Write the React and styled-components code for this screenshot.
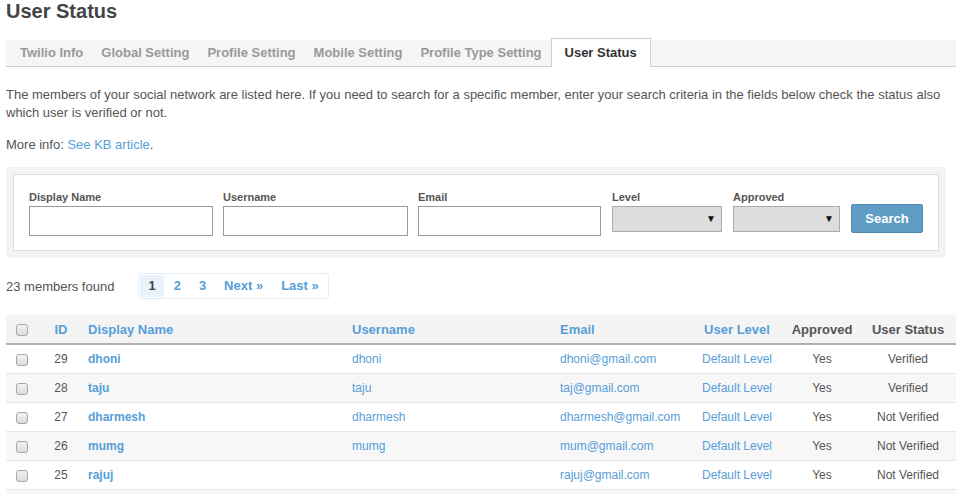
import React from 'react'
import styled, { createGlobalStyle } from 'styled-components'

const GlobalStyle = createGlobalStyle`
    body {
        margin: 0;
        background: #fff;
        font-family: 'Liberation Sans', Arial, sans-serif;
        font-size: 13px;
        color: #555;
    }
`

const Page = styled.div`
    padding: 0 6px;
`

const Title = styled.h1`
    margin: 0;
    font-size: 20px;
    line-height: 22px;
    font-weight: bold;
    color: #444;
`

const TabBar = styled.div`
    display: flex;
    align-items: flex-end;
    margin-top: 18px;
    height: 26px;
    padding-left: 5px;
    background: #f5f5f5;
    border-bottom: 1px solid #ccc;
`

const Tab = styled.div`
    height: ${p => (p.$active ? '28px' : '26px')};
    line-height: ${p => (p.$active ? '28px' : '26px')};
    padding: 0 ${p => (p.$active ? '13px' : '9px')};
    margin-bottom: ${p => (p.$active ? '-1px' : '0')};
    font-weight: bold;
    font-size: 13px;
    color: ${p => (p.$active ? '#333' : '#999')};
    background: ${p => (p.$active ? '#fff' : 'transparent')};
    border: ${p => (p.$active ? '1px solid #ccc' : 'none')};
    border-bottom: none;
`

const Text = styled.p`
    margin: ${p => p.$margin || '0'};
    line-height: 18px;
    color: #555;
`

const Link = styled.a`
    color: #569ed8;
    text-decoration: none;
    font-weight: ${p => (p.$bold ? 'bold' : 'normal')};
`

const SearchPanel = styled.div`
    margin-top: 13px;
    width: 940px;
    box-sizing: border-box;
    padding: 7px;
    background: #f3f3f3;
    border-radius: 4px;
`

const SearchInner = styled.div`
    display: flex;
    align-items: flex-end;
    gap: 10px;
    padding: 15px 15px 14px;
    background: #fff;
    border: 1px solid #ddd;
`

const Field = styled.div`
    display: flex;
    flex-direction: column;
    width: ${p => p.$width}px;
    margin-right: ${p => p.$gap || 0}px;
`

const Label = styled.label`
    font-size: 11px;
    font-weight: bold;
    line-height: 14px;
    color: #555;
    margin-bottom: 2px;
`

const Input = styled.input`
    box-sizing: border-box;
    height: 30px;
    width: 100%;
    border: 1px solid #999;
    background: #fff;
    margin: 0;
    padding: 0 4px;
`

const Select = styled.div`
    position: relative;
    box-sizing: border-box;
    height: 26px;
    margin-bottom: 4px;
    border: 1px solid #aaa;
    background: #ddd;

    &::after {
        content: '▼';
        position: absolute;
        right: 5px;
        top: 6px;
        font-size: 10px;
        line-height: 12px;
        color: #111;
    }
`

const Button = styled.button`
    box-sizing: border-box;
    width: 72px;
    height: 29px;
    margin-bottom: 3px;
    margin-left: 1px;
    border: 1px solid #5089b0;
    border-radius: 2px;
    background: #5f9dc4;
    color: #fff;
    font-family: 'Liberation Sans', Arial, sans-serif;
    font-size: 13px;
    font-weight: bold;
`

const PagerRow = styled.div`
    display: flex;
    align-items: center;
    margin-top: 15px;
`

const Count = styled.span`
    margin-right: 24px;
    color: #555;
`

const Pager = styled.div`
    display: flex;
    padding: 1px;
    border: 1px solid #e4eef8;
    border-radius: 2px;
`

const PageItem = styled.span`
    height: 22px;
    line-height: 22px;
    padding: 0 8px;
    margin-right: 2px;
    font-weight: bold;
    color: ${p => (p.$active ? '#444' : '#569ed8')};
    background: ${p => (p.$active ? '#eaf2fa' : 'transparent')};
    border-radius: 2px;

    &:last-child {
        margin-right: 0;
    }
`

const Table = styled.table`
    margin-top: 16px;
    width: 950px;
    border-collapse: collapse;
    table-layout: fixed;
`

const Th = styled.th`
    height: 28px;
    padding: 0 6px;
    background: #f4f4f4;
    border-bottom: 2px solid #b0b0b0;
    font-weight: bold;
    font-size: 13px;
    color: ${p => (p.$plain ? '#555' : '#569ed8')};
    text-align: ${p => p.$align || 'left'};
`

const Row = styled.tr`
    background: ${p => (p.$alt ? '#f7f7f7' : '#fff')};
    border-bottom: 1px solid #e6e6e6;
`

const Td = styled.td`
    height: 28px;
    padding: 0 6px;
    font-size: 12px;
    color: #555;
    text-align: ${p => p.$align || 'left'};
    white-space: nowrap;
`

const Check = styled.span`
    display: inline-block;
    vertical-align: middle;
    box-sizing: border-box;
    width: 12px;
    height: 12px;
    margin-left: -2px;
    border: 1px solid #a8a8a8;
    border-radius: 3px;
    background: linear-gradient(#f2f2f2, #dcdcdc);
`

const tabs = ['Twilio Info', 'Global Setting', 'Profile Setting', 'Mobile Setting', 'Profile Type Setting', 'User Status']

const members = [
    { id: 29, name: 'dhoni', user: 'dhoni', email: 'dhoni@gmail.com', status: 'Verified' },
    { id: 28, name: 'taju', user: 'taju', email: 'taj@gmail.com', status: 'Verified' },
    { id: 27, name: 'dharmesh', user: 'dharmesh', email: 'dharmesh@gmail.com', status: 'Not Verified' },
    { id: 26, name: 'mumg', user: 'mumg', email: 'mum@gmail.com', status: 'Not Verified' },
    { id: 25, name: 'rajuj', user: '', email: 'rajuj@gmail.com', status: 'Not Verified' },
]

function App() {
    return (
        <Page>
            <GlobalStyle />
            <Title>User Status</Title>
            <TabBar>
                {tabs.map(t => (
                    <Tab key={t} $active={t === 'User Status'}>{t}</Tab>
                ))}
            </TabBar>

            <Text $margin="19px 0 0">
                The members of your social network are listed here. If you need to search for a specific member, enter your search criteria in the fields below check the status also which user is verified or not.
            </Text>
            <Text $margin="14px 0 0">
                More info: <Link href="#">See KB article</Link>.
            </Text>

            <SearchPanel>
                <SearchInner>
                    <Field $width={184}>
                        <Label>Display Name</Label>
                        <Input />
                    </Field>
                    <Field $width={185}>
                        <Label>Username</Label>
                        <Input />
                    </Field>
                    <Field $width={183} $gap={1}>
                        <Label>Email</Label>
                        <Input />
                    </Field>
                    <Field $width={110} $gap={1}>
                        <Label>Level</Label>
                        <Select />
                    </Field>
                    <Field $width={107}>
                        <Label>Approved</Label>
                        <Select />
                    </Field>
                    <Button>Search</Button>
                </SearchInner>
            </SearchPanel>

            <PagerRow>
                <Count>23 members found</Count>
                <Pager>
                    <PageItem $active>1</PageItem>
                    <PageItem>2</PageItem>
                    <PageItem>3</PageItem>
                    <PageItem>Next »</PageItem>
                    <PageItem>Last »</PageItem>
                </Pager>
            </PagerRow>

            <Table>
                <colgroup>
                    <col style={{ width: 34 }} />
                    <col style={{ width: 42 }} />
                    <col style={{ width: 264 }} />
                    <col style={{ width: 208 }} />
                    <col style={{ width: 136 }} />
                    <col style={{ width: 94 }} />
                    <col style={{ width: 76 }} />
                    <col style={{ width: 96 }} />
                </colgroup>
                <thead>
                    <tr>
                        <Th $align="center"><Check /></Th>
                        <Th $align="center">ID</Th>
                        <Th>Display Name</Th>
                        <Th>Username</Th>
                        <Th>Email</Th>
                        <Th $align="center">User Level</Th>
                        <Th $align="center" $plain>Approved</Th>
                        <Th $align="center" $plain>User Status</Th>
                    </tr>
                </thead>
                <tbody>
                    {members.map((m, i) => (
                        <Row key={m.id} $alt={i % 2 === 1}>
                            <Td $align="center"><Check /></Td>
                            <Td $align="center">{m.id}</Td>
                            <Td><Link href="#" $bold>{m.name}</Link></Td>
                            <Td><Link href="#">{m.user}</Link></Td>
                            <Td><Link href="#">{m.email}</Link></Td>
                            <Td $align="center"><Link href="#">Default Level</Link></Td>
                            <Td $align="center">Yes</Td>
                            <Td $align="center">{m.status}</Td>
                        </Row>
                    ))}
                    <Row $alt>
                        <Td colSpan={8} />
                    </Row>
                </tbody>
            </Table>
        </Page>
    )
}

export default App
